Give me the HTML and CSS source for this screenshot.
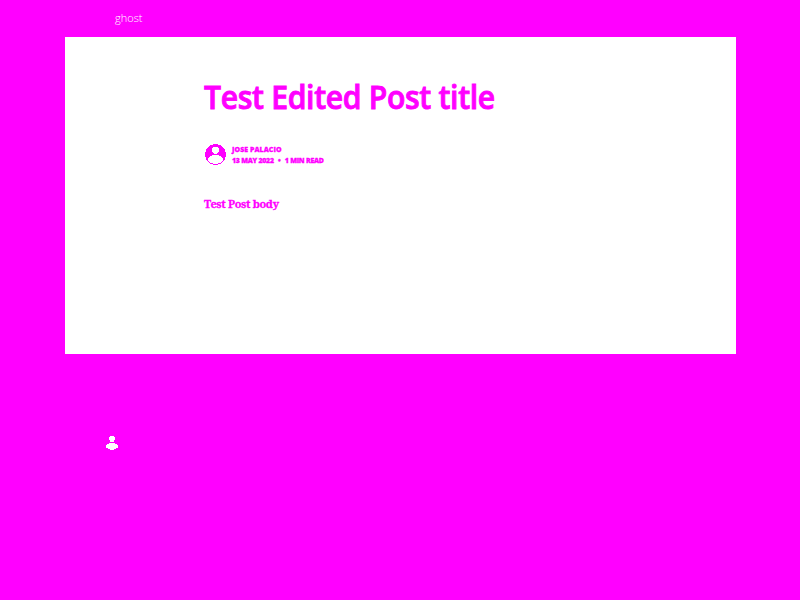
FILE: index.html
```
<!DOCTYPE html>
<html lang="en">
<head>
<meta charset="utf-8">
<title>Test Edited Post title</title>
<link rel="stylesheet" href="styles.css">
</head>
<body>
<header class="site-header"><a class="logo">ghost</a></header>
<main class="post">
  <h1 class="title">Test Edited Post title</h1>
  <div class="byline">
    <svg class="avatar" viewBox="0 0 21 21" shape-rendering="crispEdges">
      <circle cx="10.500" cy="10.500" r="10.500" fill="#f0f"/>
      <ellipse cx="10.500" cy="6.200" rx="3.500" ry="3.500" fill="#fff"/>
      <path d="M2.500 16C3 13.500 5.500 11.500 8 11h5c2.500 .5 5 2.500 5.500 5C17 18.500 14.500 20 10.500 20S4 18.500 2.500 16Z" fill="#fff"/>
    </svg>
    <div class="meta">
      <div class="author">JOSE PALACIO</div>
      <div class="details"><span class="date">13 MAY 2022</span><span class="dot">•</span><span class="read">1 MIN READ</span></div>
    </div>
  </div>
  <p class="body-text">Test Post body</p>
</main>
<footer class="site-footer">
  <svg class="person" viewBox="0 0 12 15" shape-rendering="crispEdges">
    <path d="M4 1h4v1h1v3H8v2H4V5H3V2h1ZM3 8h6v1h2v1h1v3h-2v1H8v1H4v-1H2v-1H0v-3h1V9h2Z" fill="#fff"/>
  </svg>
</footer>
</body>
</html>
```
FILE: styles.css
```
* {
  box-sizing: border-box;
}

body {
  margin: 0;
  min-height: 600px;
  background: #f0f;
  color: #f0f;
  font-family: "Open Sans", "Noto Sans", sans-serif;
}

.site-header {
  height: 37px;
  padding: 10px 0 0 115px;
}

.logo {
  display: block;
  color: #fff;
  font-size: 11px;
  line-height: 15px;
  font-weight: 300;
}

.post {
  width: 671px;
  height: 317px;
  margin-left: 65px;
  padding: 38px 0 0 139px;
  background: #fff;
}

.title {
  margin: 0;
  font-size: 32px;
  line-height: 44px;
  font-weight: 600;
  letter-spacing: -0.35px;
  white-space: nowrap;
  transform: scaleX(0.942);
  transform-origin: left;
  -webkit-text-stroke: 0.9px #f0f;
}

.byline {
  display: flex;
  gap: 6px;
  margin-top: 24px;
  height: 24px;
  padding-left: 1px;
}

.avatar {
  width: 21px;
  height: 21px;
  margin-top: 1px;
}

.meta {
  padding-top: 1px;
  font-size: 7px;
  line-height: 11px;
  font-weight: 800;
  white-space: nowrap;
  -webkit-text-stroke: 0.3px #f0f;
}

.author {
  letter-spacing: 0.05px;
}

.details {
  display: flex;
  letter-spacing: -0.27px;
}

.dot {
  width: 11px;
  text-align: center;
}

.body-text {
  margin: 29px 0 0;
  font: 700 11px/16px "Noto Serif", "DejaVu Serif", serif;
  letter-spacing: -0.34px;
  white-space: nowrap;
  -webkit-text-stroke: 0.3px #f0f;
}

.site-footer {
  padding: 81px 0 0 106px;
}

.person {
  display: block;
  width: 12px;
  height: 15px;
}
```
